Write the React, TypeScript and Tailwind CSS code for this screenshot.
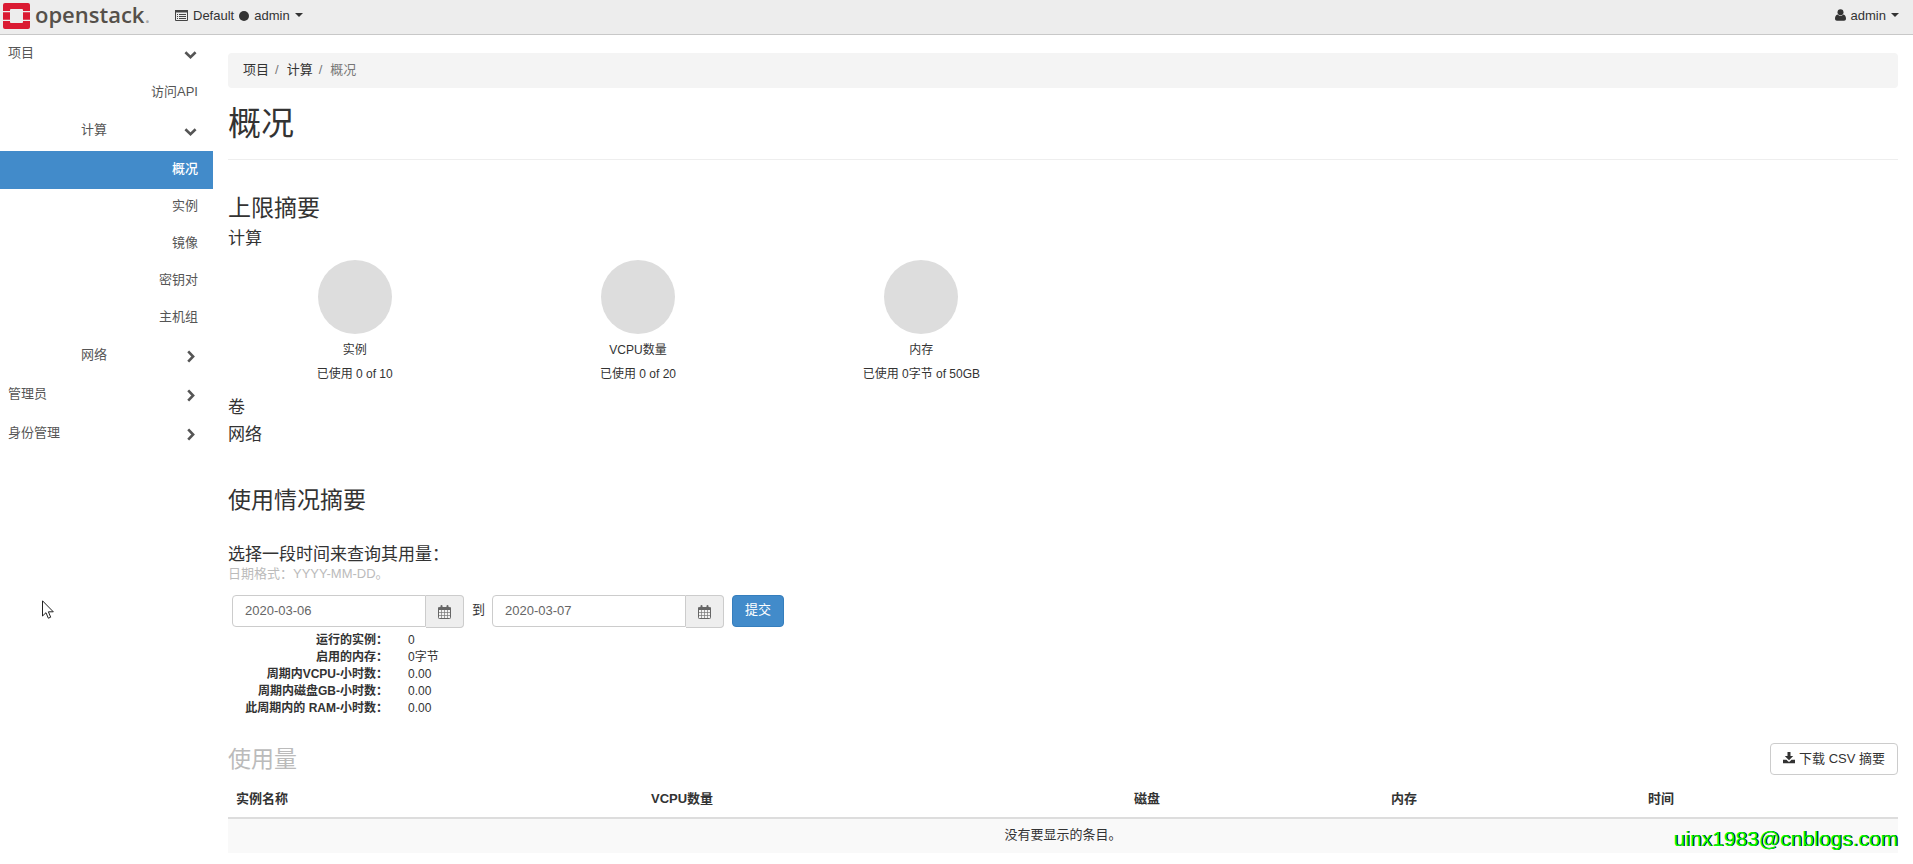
import type { ReactNode } from "react";

const computePanels = ['实例', '镜像', '密钥对', '主机组'];

const quotas = [
    { name: '实例', usage: '已使用 0 of 10' },
    { name: 'VCPU数量', usage: '已使用 0 of 20' },
    { name: '内存', usage: '已使用 0字节 of 50GB' },
];

const activity = [
    { label: '运行的实例：', value: '0' },
    { label: '启用的内存：', value: '0字节' },
    { label: '周期内VCPU-小时数：', value: '0.00' },
    { label: '周期内磁盘GB-小时数：', value: '0.00' },
    { label: '此周期内的 RAM-小时数：', value: '0.00' },
];

function OpenStackMark() {
    return (
        <svg width="27" height="26" viewBox="0 0 27 26" fill="#da1a32" aria-hidden="true">
            <path d="M2 0h23a2 2 0 0 1 2 2v6h-7V7a1 1 0 0 0-1-1H8a1 1 0 0 0-1 1v1H0V2a2 2 0 0 1 2-2z" />
            <path d="M0 9.300h7v7.400H0zM20 9.300h7v7.400h-7z" />
            <path d="M0 18h7v1a1 1 0 0 0 1 1h11a1 1 0 0 0 1-1v-1h7v6a2 2 0 0 1-2 2H2a2 2 0 0 1-2-2z" />
        </svg>
    );
}

function ListIcon() {
    return (
        <svg width="13" height="11" viewBox="0 0 13 11" aria-hidden="true">
            <path d="M.5.5h12v10H.5z" fill="none" stroke="#444" />
            <path d="M0 0h13v2.500H0z" fill="#444" />
            <path d="M2 4.500h1M4 4.500h7M2 6.500h1M4 6.500h7M2 8.500h1M4 8.500h7" stroke="#444" />
        </svg>
    );
}

function Caret() {
    return (
        <svg width="8" height="4" viewBox="0 0 8 4" fill="#333" aria-hidden="true">
            <path d="M0 0h8L4 4z" />
        </svg>
    );
}

function UserIcon() {
    return (
        <svg width="11" height="12" viewBox="0 0 11 12" fill="#333" aria-hidden="true">
            <circle cx="5.500" cy="3.200" r="3" />
            <path d="M2.700 5.400C.8 5.700 0 7.600 0 9.800 0 11 .8 11.800 1.900 11.800h7.200c1.100 0 1.900-.8 1.900-2 0-2.200-.8-4.100-2.700-4.400C7.500 6.300 6.600 6.700 5.500 6.700S3.500 6.300 2.700 5.400z" />
        </svg>
    );
}

function ChevronDown() {
    return (
        <svg width="13" height="13" viewBox="0 0 13 13" fill="none" stroke="#555" strokeWidth="2.600" aria-hidden="true">
            <path d="M1.400 4.200l5.100 4.900 5.100-4.900" />
        </svg>
    );
}

function ChevronRight() {
    return (
        <svg width="13" height="13" viewBox="0 0 13 13" fill="none" stroke="#555" strokeWidth="2.600" aria-hidden="true">
            <path d="M4.200 1.400l4.900 5.100-4.900 5.100" />
        </svg>
    );
}

function CalendarIcon() {
    return (
        <svg width="13" height="14" viewBox="0 0 13 14" fill="none" aria-hidden="true">
            <rect x="0.500" y="2.500" width="12" height="11" rx="0.800" fill="#fff" fillOpacity="0.300" stroke="#666" />
            <path d="M0 2.500h13V5H0z" fill="#666" />
            <path d="M3.500 1v2.500M9.500 1v2.500" stroke="#666" strokeWidth="2" strokeLinecap="round" />
            <path d="M3.500 5v8M6.500 5v8M9.500 5v8M1 7.500h11M1 10.500h11" stroke="#777" strokeWidth="0.700" />
        </svg>
    );
}

function DownloadIcon() {
    return (
        <svg width="12" height="12" viewBox="0 0 12 12" fill="#333" aria-hidden="true">
            <path d="M4.500 0h3v4h2.700L6 8.200 1.800 4h2.700z" />
            <path d="M0 7.800h3.500L5 9.300a1.400 1.400 0 0 0 2 0l1.500-1.500H12v3.400H0z" />
        </svg>
    );
}

function NavHeading({ children, nested = false, open = false }: { children: ReactNode; nested?: boolean; open?: boolean }) {
    return (
        <button type="button" className={`flex h-[39px] w-full items-center justify-between pr-4 ${nested ? 'pl-[81px]' : 'pl-2'}`}>
            <span className="pb-1">{children}</span>
            {open ? <ChevronDown /> : <ChevronRight />}
        </button>
    );
}

function DateField({ id, label, value }: { id: string; label: string; value: string }) {
    return (
        <div className="flex items-start">
            <input
                id={id}
                aria-label={label}
                defaultValue={value}
                className="h-8 w-[194px] rounded-l border border-[#ccc] bg-white px-3 pb-[2px] text-[13px] text-[#666] outline-none"
            />
            <button type="button" aria-label="选择日期" className="flex h-[33px] w-[38px] items-center justify-center rounded-r border border-l-0 border-[#ccc] bg-[#eee]">
                <CalendarIcon />
            </button>
        </div>
    );
}

function App() {
    return (
        <div className="bg-white font-['Liberation_Sans','Noto_Sans_CJK_SC',sans-serif] text-[13px] leading-[19px] text-[#333]">
            <header className="flex h-[35px] items-center justify-between border-b border-[#c8c8c8] bg-[#ededed] pr-[14px] pb-[2px] pl-[3px]">
                <div className="flex items-center">
                    <a href="#" className="flex items-center gap-[5px]">
                        <OpenStackMark />
                        <span className="flex w-[114px] items-baseline pb-1 font-['Open_Sans',sans-serif] text-[22px] leading-[26px] font-semibold text-[#55504a]">
                            openstack<span className="font-normal text-[#aaa]">.</span>
                        </span>
                    </a>
                    <button type="button" className="ml-[26px] flex items-center pb-[2px]">
                        <ListIcon />
                        <span className="ml-[5px]">Default</span>
                        <span className="mx-[5px] mt-[2px] size-[10px] rounded-full bg-[#333]"></span>
                        <span className="mr-[5px]">admin</span>
                        <Caret />
                    </button>
                </div>
                <button type="button" className="flex items-center pb-[2px]">
                    <UserIcon />
                    <span className="mx-[5px]">admin</span>
                    <Caret />
                </button>
            </header>

            <div className="flex">
                <nav className="w-[213px] shrink-0 text-[#555]">
                    <NavHeading open>项目</NavHeading>
                    <a href="#" className="flex h-[38px] items-center justify-end pr-[15px] pb-[3px]">访问API</a>
                    <NavHeading nested open>计算</NavHeading>
                    <a href="#" className="flex h-[38px] items-center justify-end bg-[#428bca] pr-[15px] pb-[3px] font-medium text-white">概况</a>
                    {computePanels.map((panel) => (
                        <a key={panel} href="#" className="flex h-[37px] items-center justify-end pr-[15px] pb-1">{panel}</a>
                    ))}
                    <NavHeading nested>网络</NavHeading>
                    <NavHeading>管理员</NavHeading>
                    <NavHeading>身份管理</NavHeading>
                </nav>

                <main className="min-w-0 flex-1 px-[15px] pt-[18px]">
                    <ol className="flex h-[35px] items-center rounded bg-[#f4f4f4] px-[15px] pb-[2px]">
                        <li><a href="#">项目</a><span className="mr-2 ml-[6px] text-[#777]">/</span></li>
                        <li><a href="#">计算</a><span className="mr-2 ml-[6px] text-[#777]">/</span></li>
                        <li className="text-[#777]">概况</li>
                    </ol>

                    <h1 className="mt-4 border-b border-[#eee] pb-4 text-[33px] leading-[39px]">概况</h1>

                    <section>
                        <h3 className="mt-9 text-[23px] leading-[25px]">上限摘要</h3>
                        <h4 className="mt-2 text-[17px] leading-[19px]">计算</h4>
                        <div className="-mx-[15px] mt-3 grid grid-cols-6">
                            {quotas.map((quota) => (
                                <div key={quota.name} className="flex flex-col items-center text-xs leading-4">
                                    <div className="size-[74px] rounded-full bg-[#ddd]"></div>
                                    <div className="mt-2">{quota.name}</div>
                                    <div className="mt-2">{quota.usage}</div>
                                </div>
                            ))}
                        </div>
                        <h4 className="mt-4 text-[17px] leading-[19px]">卷</h4>
                        <h4 className="mt-2 text-[17px] leading-[19px]">网络</h4>
                    </section>

                    <section>
                        <h3 className="mt-11 text-[23px] leading-[25px]">使用情况摘要</h3>
                        <form onSubmit={(e) => e.preventDefault()}>
                            <h4 className="mt-8 text-[17px] leading-[19px]">选择一段时间来查询其用量：</h4>
                            <p className="text-[#bbb]">日期格式：YYYY-MM-DD。</p>
                            <div className="mt-3 ml-1 flex items-start">
                                <DateField id="start" label="开始日期" value="2020-03-06" />
                                <label htmlFor="end" className="mx-2 w-3 leading-[30px]">到</label>
                                <DateField id="end" label="结束日期" value="2020-03-07" />
                                <button type="submit" className="ml-2 h-8 w-[52px] rounded border border-[#357ebd] bg-[#428bca] pb-[3px] text-white">提交</button>
                            </div>
                        </form>
                        <dl className="mt-1 text-xs leading-[17px]">
                            {activity.map((item) => (
                                <div key={item.label} className="flex gap-5">
                                    <dt className="w-40 text-right font-bold whitespace-nowrap">{item.label}</dt>
                                    <dd>{item.value}</dd>
                                </div>
                            ))}
                        </dl>
                    </section>

                    <section className="mt-[26px]">
                        <div className="flex items-center justify-between">
                            <h3 className="text-[23px] leading-[25px] text-[#bbb]">使用量</h3>
                            <button type="button" className="flex h-8 w-32 items-center justify-center gap-1 rounded border border-[#ccc] bg-white pb-[2px] whitespace-nowrap">
                                <DownloadIcon />
                                下载 CSV 摘要
                            </button>
                        </div>
                        <table className="mt-[6px] w-full table-fixed">
                            <thead>
                                <tr className="border-b-2 border-[#ddd] text-left">
                                    <th className="w-[415px] px-2 pt-2 pb-[9px]">实例名称</th>
                                    <th className="w-[483px] px-2 pt-2 pb-[9px]">VCPU数量</th>
                                    <th className="w-[257px] px-2 pt-2 pb-[9px]">磁盘</th>
                                    <th className="w-[257px] px-2 pt-2 pb-[9px]">内存</th>
                                    <th className="w-[258px] px-2 pt-2 pb-[9px]">时间</th>
                                </tr>
                            </thead>
                            <tbody>
                                <tr className="bg-[#f9f9f9]">
                                    <td colSpan={5} className="h-[35px] px-2 pb-[3px] text-center">没有要显示的条目。</td>
                                </tr>
                            </tbody>
                        </table>
                    </section>
                </main>
            </div>

            <div className="absolute right-[15px] bottom-3 text-[21px] leading-[26px] text-[#00ff00] [text-shadow:1px_0_0_#000]">uinx1983@cnblogs.com</div>
            <svg className="absolute top-[600px] left-[42px]" width="12" height="19" viewBox="0 0 12 19" aria-hidden="true">
                <path d="M.5.800v15.200l3.500-3.300 2.300 5.500 2.400-1-2.300-5.400h4.900z" fill="#fff" stroke="#222" />
            </svg>
        </div>
    );
}

export default App;
